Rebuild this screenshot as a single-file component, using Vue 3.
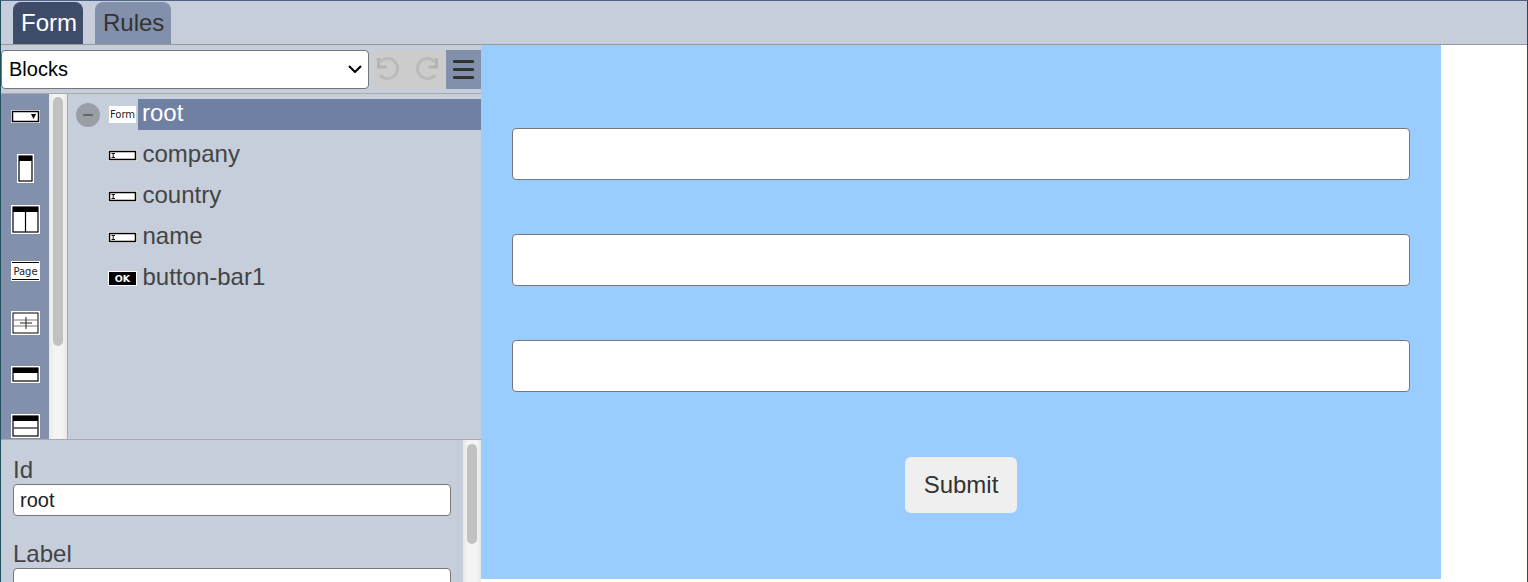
<script setup>
const rows = [
  { name: 'company', kind: 'input' },
  { name: 'country', kind: 'input' },
  { name: 'name', kind: 'input' },
  { name: 'button-bar1', kind: 'ok' }
]
</script>

<template>
  <div class="app">
    <header class="tabs">
      <div class="tab active">Form</div>
      <div class="tab">Rules</div>
    </header>
    <main class="body">
      <section class="left">
        <div class="toolbar">
          <div class="select-wrap">
            <select class="blocks"><option>Blocks</option></select>
            <svg class="chevron" width="14" height="8" viewBox="0 0 14 8"><path d="M1 1l6 6 6-6" fill="none" stroke="#000" stroke-width="2" /></svg>
          </div>
          <div class="history">
            <svg width="38" height="39" viewBox="0 0 38 39">
              <path d="M5.500 8v9h8" fill="none" stroke="#b4b4b4" stroke-width="3" />
              <path d="M7 12A10 10 0 1 1 7 25" fill="none" stroke="#bbb" stroke-width="3" />
            </svg>
            <svg width="35" height="39" viewBox="0 0 35 39">
              <path d="M25.500 8v9h-8" fill="none" stroke="#b4b4b4" stroke-width="3" />
              <path d="M24 12A10 10 0 1 0 24 25" fill="none" stroke="#bbb" stroke-width="3" />
            </svg>
          </div>
          <div class="menu">
            <span></span><span></span><span></span>
          </div>
        </div>
        <div class="mid">
          <div class="palette">
            <div class="slots">
              <div class="slot">
                <svg width="29" height="13" viewBox="0 0 29 13"><rect width="29" height="13" fill="#fff" /><rect x="1.500" y="1.500" width="26" height="10" fill="#fff" stroke="#000" stroke-width="1.500" /><path d="M20 4h5l-2.500 5z" fill="#000" /></svg>
              </div>
              <div class="slot">
                <svg width="17" height="29" viewBox="0 0 17 29"><rect width="17" height="29" fill="#fff" /><rect x="2" y="2" width="13" height="25" fill="#fff" stroke="#000" stroke-width="1.200" /><rect x="2" y="2" width="13" height="5" fill="#000" /></svg>
              </div>
              <div class="slot">
                <svg width="29" height="29" viewBox="0 0 29 29"><rect width="29" height="29" fill="#fff" /><rect x="2" y="2" width="25" height="25" fill="#fff" stroke="#000" stroke-width="1.200" /><rect x="2" y="2" width="25" height="5" fill="#000" /><path d="M14.500 6v21" stroke="#000" stroke-width="1.200" /></svg>
              </div>
              <div class="slot">
                <svg width="29" height="20" viewBox="0 0 29 20"><rect width="29" height="20" fill="#fff" /><path d="M1 1.500h27M1 18.500h27" stroke="#000" stroke-width="1" /><text x="14.500" y="13.500" text-anchor="middle" class="page-text">Page</text></svg>
              </div>
              <div class="slot">
                <svg width="29" height="24" viewBox="0 0 29 24"><rect width="29" height="24" fill="#fff" /><rect x="2" y="2" width="25" height="20" fill="#fff" stroke="#000" stroke-width="1" /><path d="M2 9h25M2 15h25" stroke="#777" /><path d="M9 12h12M15 6v12" stroke="#222" /></svg>
              </div>
              <div class="slot">
                <svg width="29" height="17" viewBox="0 0 29 17"><rect width="29" height="17" fill="#fff" /><rect x="2" y="2" width="25" height="13" fill="#fff" stroke="#000" stroke-width="1.200" /><rect x="2" y="2" width="25" height="5" fill="#000" /></svg>
              </div>
              <div class="slot">
                <svg width="29" height="24" viewBox="0 0 29 24"><rect width="29" height="24" fill="#fff" /><rect x="2" y="2" width="25" height="20" fill="#fff" stroke="#000" stroke-width="1.200" /><rect x="2" y="2" width="25" height="5" fill="#000" /><path d="M2 14h25" stroke="#444" stroke-width="1.500" /></svg>
              </div>
            </div>
          </div>
          <div class="scroll palette-scroll"><div class="thumb"></div></div>
          <div class="tree">
            <div class="row root">
              <span class="toggle"><i></i></span>
              <span class="form-icon">Form</span>
              <span class="selected">root</span>
            </div>
            <div v-for="row in rows" :key="row.name" class="row">
              <svg v-if="row.kind === 'input'" class="ricon" width="29" height="11" viewBox="0 0 29 11">
                <rect width="29" height="11" fill="#fff" />
                <rect x="1.500" y="1.500" width="26" height="8" fill="#fff" stroke="#000" stroke-width="1.500" />
                <path d="M3.500 3.500h3.500M3.500 7.500h3.500M5.200 3.500v4" stroke="#000" stroke-width="0.900" />
              </svg>
              <span v-else class="ok-icon">OK</span>
              <span class="label">{{ row.name }}</span>
            </div>
          </div>
        </div>
        <div class="props">
          <div class="fields">
            <label class="prop">Id<input value="root" /></label>
            <label class="prop">Label<input /></label>
          </div>
          <div class="scroll props-scroll"><div class="thumb"></div></div>
        </div>
      </section>
      <section class="right">
        <form class="canvas" @submit.prevent>
          <input class="cinput" />
          <input class="cinput" />
          <input class="cinput" />
          <button class="submit">Submit</button>
        </form>
      </section>
    </main>
  </div>
</template>

<style>
html, body { margin: 0; overflow: hidden; background: #fff; }
</style>

<style scoped>
.app {
  box-sizing: border-box;
  width: 1528px;
  height: 582px;
  overflow: hidden;
  display: flex;
  flex-direction: column;
  border-left: 1px solid #1d4f5c;
  border-right: 1px solid #1d4f5c;
  border-top: 1px solid #4f6288;
  font-family: "Liberation Sans", Arial, sans-serif;
  color: #333;
}
.tabs {
  height: 43px;
  flex: none;
  display: flex;
  align-items: flex-end;
  gap: 12px;
  padding-left: 12px;
  background: #c6cedb;
  border-bottom: 1px solid #999;
}
.tab {
  height: 42px;
  line-height: 42px;
  padding: 0 7px 0 8px;
  font-size: 24px;
  border-radius: 8px 8px 0 0;
  background: #8290ab;
  color: #333;
}
.tab.active { background: #3e4c69; color: #fff; padding-right: 6px; }
.body { flex: 1; min-height: 0; display: flex; }
.left {
  width: 480px;
  flex: none;
  display: flex;
  flex-direction: column;
  background: #c6cedb;
}
.toolbar {
  box-sizing: border-box;
  height: 49px;
  flex: none;
  display: flex;
  align-items: flex-start;
  padding-top: 5px;
  border-bottom: 1px solid #aaa;
}
.select-wrap { position: relative; width: 368px; height: 39px; flex: none; }
.blocks {
  box-sizing: border-box;
  display: block;
  width: 368px;
  height: 39px;
  padding: 0 0 2px 7px;
  appearance: none;
  font: 20px "Liberation Sans", Arial, sans-serif;
  color: #000;
  background: #fff;
  border: 1px solid #767676;
  border-radius: 4px;
}
.chevron { position: absolute; left: 347px; top: 15px; pointer-events: none; }
.history {
  margin-left: 4px;
  width: 73px;
  height: 39px;
  display: flex;
  background: #ccc;
}
.history svg { flex: none; display: block; }
.menu {
  box-sizing: border-box;
  width: 35px;
  height: 39px;
  background: #8290ab;
  display: flex;
  flex-direction: column;
  justify-content: center;
  align-items: center;
  gap: 5px;
}
.menu span {
  width: 21px;
  height: 3px;
  border-radius: 1px;
  background: #333;
}
.mid { height: 345px; flex: none; display: flex; overflow: hidden; }
.palette { width: 48px; flex: none; background: #8290ab; overflow: hidden; }
.slots { margin-top: -3px; }
.slot {
  height: 51.500px;
  display: flex;
  align-items: center;
  justify-content: center;
}
.slot svg { display: block; flex: none; }
.page-text { font: 10px "DejaVu Sans", sans-serif; fill: #222; }
.scroll {
  box-sizing: border-box;
  width: 18px;
  flex: none;
  background: linear-gradient(90deg, #e8e8e8, #f4f4f4 30%, #f4f4f4 70%, #e8e8e8);
}
.thumb { width: 10px; margin-left: 4px; border-radius: 5px; background: #c1c1c1; }
.palette-scroll .thumb { height: 249px; margin-top: 3px; }
.props-scroll .thumb { height: 100px; margin-top: 4px; }
.tree { flex: 1; min-width: 0; border-left: 1px solid #aaa; padding-top: 5px; }
.row {
  height: 41px;
  display: flex;
  align-items: flex-start;
  font-size: 24px;
  line-height: 31px;
  color: #444;
  padding-left: 40px;
}
.row.root { padding-left: 8px; }
.ricon { margin-top: 10px; flex: none; display: block; }
.label { margin-left: 5.500px; margin-top: -2px; }
.toggle {
  width: 24px;
  height: 24px;
  margin-top: 4px;
  border-radius: 50%;
  background: #9a9ea6;
  display: flex;
  align-items: center;
  justify-content: center;
  flex: none;
}
.toggle i { width: 10px; height: 2px; background: #666; }
.form-icon {
  width: 27px;
  height: 17px;
  margin: 7px 0 0 9px;
  flex: none;
  background: #fff;
  color: #222;
  font: 10px/17px "DejaVu Sans", sans-serif;
  text-align: center;
  white-space: nowrap;
  overflow: hidden;
}
.selected {
  flex: 1;
  margin-left: 2px;
  padding-left: 4px;
  height: 31px;
  line-height: 28px;
  background: #6f80a2;
  color: #fff;
}
.ok-icon {
  box-sizing: border-box;
  width: 29px;
  height: 15px;
  margin-top: 8px;
  flex: none;
  background: #000;
  border: 1px solid #fff;
  color: #fff;
  font: bold 9.500px/13px "DejaVu Sans", sans-serif;
  text-align: center;
}
.ok-icon + .label { margin-left: 5.500px; margin-top: -2px; }
.props {
  flex: 1;
  min-height: 0;
  display: flex;
  border-top: 1px solid #aaa;
  overflow: hidden;
}
.fields { flex: 1; min-width: 0; padding: 17px 12px 0 12px; }
.prop { display: block; font-size: 24px; line-height: 26px; color: #444; margin-bottom: 25px; }
.prop input {
  display: block;
  box-sizing: border-box;
  width: 438px;
  height: 32px;
  padding: 0 6px;
  margin-top: 1px;
  font: 20px "Liberation Sans", Arial, sans-serif;
  color: #222;
  background: #fff;
  border: 1px solid #777;
  border-radius: 4px;
}
.right { flex: 1; min-width: 0; background: #fff; }
.canvas {
  box-sizing: border-box;
  width: 960px;
  height: 534px;
  background: #99ccff;
  padding: 83px 31px 0;
  display: flex;
  flex-direction: column;
  gap: 54px;
  align-items: center;
}
.cinput {
  box-sizing: border-box;
  width: 898px;
  height: 52px;
  flex: none;
  background: #fff;
  border: 1px solid #777;
  border-radius: 4px;
}
.submit {
  width: 112px;
  height: 56px;
  margin-top: 11px;
  flex: none;
  border: 0;
  border-radius: 6px;
  background: #efefef;
  color: #333;
  font: 24px "Liberation Sans", Arial, sans-serif;
}
</style>
